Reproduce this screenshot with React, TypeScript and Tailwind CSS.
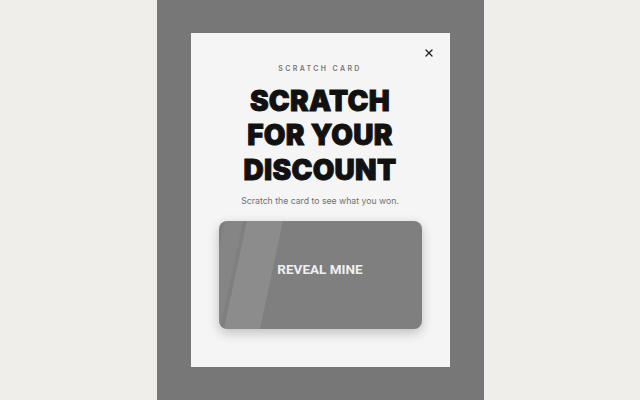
import { X } from 'lucide-react';

const App = () => {
  return (
    <div className="flex h-[400px] w-full justify-center bg-[#efeeea]" style={{ fontFamily: 'Inter, "Liberation Sans", sans-serif' }}>
      <div className="flex h-[400px] w-[327px] justify-center bg-[#777777] pt-[33px]">
        {/* Modal */}
        <div className="relative flex h-[334px] w-[259px] flex-col items-center bg-[#f5f5f5] px-[28px] pt-[31px]">
          <button className="absolute right-[15px] top-[14px] text-[#222]" aria-label="Close">
            <X className="h-[12px] w-[12px]" strokeWidth={2.6} />
          </button>

          <span className="text-[7px] font-semibold uppercase tracking-[0.34em] text-[#777]">Scratch card</span>

          <h1 className="mt-[9px] text-center text-[28px] font-black uppercase leading-[34.5px] tracking-[0.01em] text-[#111] [-webkit-text-stroke:0.9px_#111]">
            Scratch
            <br />
            for your
            <br />
            discount
          </h1>

          <p className="mt-[8px] text-[8.7px] text-[#707070]">Scratch the card to see what you won.</p>

          {/* Scratch card */}
          <div className="relative mt-[13px] flex h-[108px] w-full items-center justify-center overflow-hidden rounded-[8px] bg-[#7f7f7f] shadow-[0_4px_12px_rgba(0,0,0,0.22)]">
            <div className="absolute -top-[4px] left-[16px] h-[120px] w-[36px] skew-x-[-12deg] bg-white/10" />
            <div className="absolute -top-[4px] left-[-6px] h-[120px] w-[18px] skew-x-[-12deg] bg-white/5" />
            <span
              className="relative -mt-[12px] text-[13.5px] font-bold text-[#efefef]"
              style={{ fontFamily: 'Roboto, "Liberation Sans", sans-serif' }}
            >
              REVEAL MINE
            </span>
          </div>
        </div>
      </div>
    </div>
  );
};

export default App;
